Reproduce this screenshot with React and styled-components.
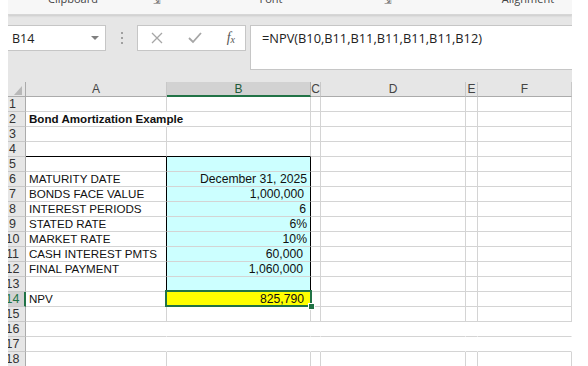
import styled, { createGlobalStyle } from "styled-components";

const GlobalStyle = createGlobalStyle`
  html, body {
    margin: 0;
    padding: 0;
    background: #ffffff;
  }
`;

const green = "#217346";
const grid = "#d4d4d4";

const columns = [
  { key: "A", width: 141 },
  { key: "B", width: 144 },
  { key: "C", width: 10 },
  { key: "D", width: 145 },
  { key: "E", width: 12 },
  { key: "F", width: 94 },
];

const template = `18px ${columns.map((c) => `${c.width}px`).join(" ")}`;

const rows = [
  { n: 1 },
  { n: 2, a: "Bond Amortization Example", bold: true, spill: true },
  { n: 3 },
  { n: 4, boxTop: true },
  { n: 5, box: true },
  { n: 6, a: "MATURITY DATE", b: "December 31, 2025", pad: 3, box: true },
  { n: 7, a: "BONDS FACE VALUE", b: "1,000,000", pad: 6, box: true },
  { n: 8, a: "INTEREST PERIODS", b: "6", pad: 4, box: true },
  { n: 9, a: "STATED RATE", b: "6%", pad: 3, box: true },
  { n: 10, a: "MARKET RATE", b: "10%", pad: 3, box: true },
  { n: 11, a: "CASH INTEREST PMTS", b: "60,000", pad: 7, box: true },
  { n: 12, a: "FINAL PAYMENT", b: "1,060,000", pad: 7, box: true },
  { n: 13, box: true, boxBottom: true },
  { n: 14, a: "NPV", b: "825,790", pad: 6, selected: true },
  { n: 15 },
  { n: 16, bare: true },
  { n: 17, bare: true },
  { n: 18 },
];

const App = () => {
  return (
    <>
      <GlobalStyle />
      <Frame>
        <Ribbon>
          <GroupLabel $width={130}>Clipboard</GroupLabel>
          <Launcher $width={38}>⇲</Launcher>
          <GroupLabel $width={190}>Font</GroupLabel>
          <Launcher $width={44}>⇲</Launcher>
          <GroupLabel $width={236}>Alignment</GroupLabel>
        </Ribbon>
        <FormulaArea>
          <NameBox>
            <span>B14</span>
            <svg width="8" height="5" viewBox="0 0 8 5">
              <path d="M0 0 L8 0 L4 4 Z" fill="#808080" />
            </svg>
          </NameBox>
          <Grip>
            <i />
            <i />
            <i />
          </Grip>
          <FxBox>
            <svg width="12" height="12" viewBox="0 0 12 12">
              <path d="M1 1 L11 11 M11 1 L1 11" stroke="#a6a6a6" strokeWidth="1.3" fill="none" />
            </svg>
            <svg width="14" height="12" viewBox="0 0 14 12">
              <path d="M1 6 L5 10 L13 1" stroke="#a6a6a6" strokeWidth="1.8" fill="none" />
            </svg>
            <FxGlyph>
              f<sub>x</sub>
            </FxGlyph>
          </FxBox>
          <FormulaInput>=NPV(B10,B11,B11,B11,B11,B11,B12)</FormulaInput>
        </FormulaArea>
        <Sheet>
          <Corner>
            <svg width="8" height="9" viewBox="0 0 8 9">
              <path d="M8 0 L8 9 L0 9 Z" fill="#b8b8b8" />
            </svg>
          </Corner>
          {columns.map((c) => (
            <ColHeader key={c.key} $active={c.key === "B"}>
              {c.key}
            </ColHeader>
          ))}
          {rows.map((r) => (
            <Row key={r.n} r={r} />
          ))}
        </Sheet>
      </Frame>
    </>
  );
};

const Row = ({ r }) => (
  <>
    <RowHeader $active={r.selected}>
      <span>{r.n}</span>
    </RowHeader>
    <Cell
      $bold={r.bold}
      $size={11.6}
      $right={r.spill || r.bare ? "transparent" : r.box ? "#000" : grid}
      $bottom={r.boxTop ? "#000" : grid}
      $spill={r.spill}
    >
      {r.a}
    </Cell>
    <Cell
      $align="right"
      $pad={r.pad}
      $size={12.2}
      $fill={r.selected ? "#ffff00" : r.box ? "#ccffff" : "#fff"}
      $right={r.bare ? "transparent" : r.box ? "#000" : grid}
      $bottom={r.boxTop || r.boxBottom ? "#000" : grid}
      $spill={r.selected}
    >
      {r.b}
      {r.selected && (
        <Selection>
          <Handle />
        </Selection>
      )}
    </Cell>
    {columns.slice(2).map((c) => (
      <Cell key={c.key} $right={r.bare ? "transparent" : grid} $bottom={grid} />
    ))}
  </>
);

export default App;

const Frame = styled.div`
  width: 564px;
  height: 366px;
  margin-left: 8px;
  overflow: hidden;
  display: flex;
  flex-direction: column;
  font-family: "Liberation Sans", Arial, sans-serif;
`;

const Ribbon = styled.div`
  height: 14px;
  flex: none;
  display: flex;
  align-items: flex-start;
  overflow: hidden;
  background: #f7f7f7;
  border-bottom: 1px solid #d6d6d6;
  box-shadow: 0 1px 2px rgba(0, 0, 0, 0.12);
  position: relative;
  z-index: 1;
`;

const GroupLabel = styled.div`
  width: ${(p) => p.$width}px;
  flex: none;
  margin-top: -8px;
  text-align: center;
  font-family: "Open Sans", "Noto Sans", sans-serif;
  font-size: 11px;
  line-height: 14px;
  color: #444;
  white-space: nowrap;
`;

const Launcher = styled(GroupLabel)`
  font-size: 9px;
  color: #666;
  margin-top: -6px;
`;

const FormulaArea = styled.div`
  height: 67px;
  flex: none;
  display: flex;
  align-items: flex-start;
  padding-top: 10px;
  box-sizing: border-box;
  background: #e6e6e6;
`;

const NameBox = styled.div`
  width: 98px;
  height: 26px;
  box-sizing: border-box;
  flex: none;
  display: flex;
  align-items: center;
  justify-content: space-between;
  padding: 0 6px 0 4px;
  background: #fff;
  border: 1px solid #c6c6c6;
  border-left: none;
  font-family: "Open Sans", "Noto Sans", sans-serif;
  font-size: 12.5px;
  color: #222;
`;

const Grip = styled.div`
  width: 31px;
  height: 26px;
  flex: none;
  display: flex;
  flex-direction: column;
  align-items: center;
  justify-content: center;
  gap: 3px;

  i {
    width: 2px;
    height: 2px;
    background: #a0a0a0;
  }
`;

const FxBox = styled.div`
  width: 109px;
  height: 26px;
  box-sizing: border-box;
  flex: none;
  display: flex;
  align-items: center;
  justify-content: space-between;
  padding: 0 10px 0 13px;
  background: #fff;
  border: 1px solid #c6c6c6;
`;

const FxGlyph = styled.span`
  font-family: "Liberation Serif", "DejaVu Serif", serif;
  font-style: italic;
  font-size: 14px;
  color: #555;
  line-height: 1;

  sub {
    font-size: 10px;
    vertical-align: baseline;
    position: relative;
    top: 1px;
  }
`;

const FormulaInput = styled.div`
  flex: 1;
  height: 45px;
  margin-left: 4px;
  box-sizing: border-box;
  padding: 3px 0 0 11px;
  background: #fff;
  border: 1px solid #c6c6c6;
  border-right: none;
  font-family: "Open Sans", "Noto Sans", sans-serif;
  font-size: 12.8px;
  line-height: 18px;
  color: #222;
`;

const Sheet = styled.div`
  display: grid;
  grid-template-columns: ${template};
  grid-auto-rows: 15px;
  background: #fff;
`;

const Corner = styled.div`
  background: #e6e6e6;
  border-right: 1px solid #ababab;
  border-bottom: 1px solid #ababab;
  display: flex;
  align-items: flex-end;
  justify-content: flex-end;
  padding: 0 3px 1px 0;
`;

const ColHeader = styled.div`
  background: ${(p) => (p.$active ? "#d2d2d2" : "#e6e6e6")};
  border-right: 1px solid ${(p) => (p.$active ? "#ababab" : "#c8c8c8")};
  border-bottom: ${(p) => (p.$active ? `2px solid ${green}` : "1px solid #ababab")};
  display: flex;
  align-items: center;
  justify-content: center;
  font-size: 12px;
  color: ${(p) => (p.$active ? "#1f5b3a" : "#444")};
  overflow: hidden;
`;

const RowHeader = styled.div`
  background: ${(p) => (p.$active ? "#d2d2d2" : "#e6e6e6")};
  border-right: ${(p) => (p.$active ? `2px solid ${green}` : "1px solid #ababab")};
  border-bottom: 1px solid #c8c8c8;
  display: flex;
  justify-content: center;
  align-items: flex-end;
  padding: 0 ${(p) => (p.$active ? 7 : 8)}px 0 0;
  overflow: hidden;
  font-size: 12.5px;
  line-height: 14px;
  color: ${(p) => (p.$active ? green : "#333")};

  span {
    white-space: nowrap;
  }
`;

const Cell = styled.div`
  position: relative;
  box-sizing: border-box;
  background: ${(p) => p.$fill || "#fff"};
  border-right: 1px solid ${(p) => p.$right};
  border-bottom: 1px solid ${(p) => p.$bottom};
  display: flex;
  align-items: flex-end;
  justify-content: ${(p) => (p.$align === "right" ? "flex-end" : "flex-start")};
  padding: 0 ${(p) => p.$pad || 3}px 0 3px;
  white-space: nowrap;
  overflow: ${(p) => (p.$spill ? "visible" : "hidden")};
  z-index: ${(p) => (p.$spill ? 1 : "auto")};
  font-size: ${(p) => p.$size || 12}px;
  font-weight: ${(p) => (p.$bold ? 700 : 400)};
  color: #111;
  line-height: 14px;
`;

const Selection = styled.div`
  position: absolute;
  left: -2px;
  top: -2px;
  right: -2px;
  bottom: -1px;
  border: 2px solid ${green};
  pointer-events: none;
  z-index: 2;
`;

const Handle = styled.div`
  position: absolute;
  right: -5px;
  bottom: -5px;
  width: 5px;
  height: 5px;
  background: ${green};
  border: 1px solid #fff;
`;
